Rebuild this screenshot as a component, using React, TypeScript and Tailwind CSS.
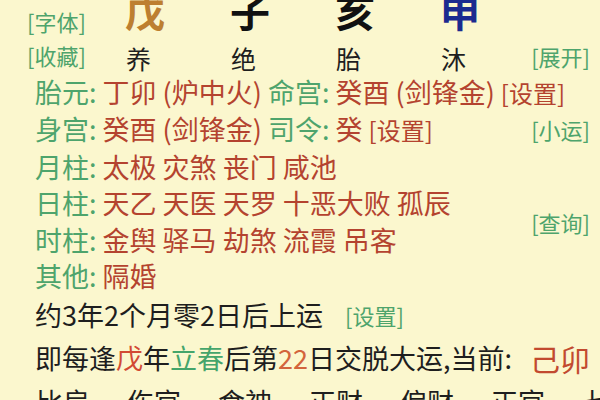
import React from "react";

const G = "text-[#4ea46c]";
const R = "text-[#b4432f]";

function Line({ label, children }: { label: string; children: React.ReactNode }) {
  return (
    <div className="whitespace-nowrap text-[27px] leading-[36.4px]">
      <span className={G}>{label}: </span>
      {children}
    </div>
  );
}

export default function App() {
  return (
    <div className="w-[600px] h-[400px] overflow-hidden bg-[#fbf7ce] text-[#1e1e1e] font-['Noto_Sans_CJK_SC','Noto_Sans',sans-serif]">
      {/* Row 1 */}
      <div className="flex h-[36px] pl-[27px]">
        <span className={`w-[65.5px] text-[22px] leading-[22px] mt-[10px] whitespace-nowrap ${G}`}>[字体]</span>
        <span className="w-[105px] text-center text-[40px] leading-[40px] -mt-[10px] font-bold text-[#bd7f30]">戊</span>
        <span className="w-[105px] text-center text-[40px] leading-[40px] -mt-[10px] font-bold text-[#111111]">子</span>
        <span className="w-[105px] text-center text-[40px] leading-[40px] -mt-[10px] font-bold text-[#111111]">亥</span>
        <span className="w-[105px] text-center text-[40px] leading-[40px] -mt-[10px] font-bold text-[#1b2a8f]">申</span>
      </div>
      {/* Row 2 */}
      <div className="flex h-[38px] pl-[27px] pr-[10px]">
        <span className={`w-[59px] text-[22px] leading-[22px] mt-[8px] whitespace-nowrap ${G}`}>[收藏]</span>
        <span className="w-[105px] text-center text-[25px] leading-[26px] mt-[9px]">养</span>
        <span className="w-[105px] text-center text-[25px] leading-[26px] mt-[9px]">绝</span>
        <span className="w-[105px] text-center text-[25px] leading-[26px] mt-[9px]">胎</span>
        <span className="w-[105px] text-center text-[25px] leading-[26px] mt-[9px]">沐</span>
        <span className={`flex-1 text-right text-[22px] leading-[22px] mt-[9px] whitespace-nowrap ${G}`}>[展开]</span>
      </div>
      {/* Info */}
      <div className="flex pl-[35px] pr-[10px]">
        <div className="flex-1 min-w-0 flex flex-col">
          <Line label="胎元">
            <span className={R}>丁卯 (炉中火) </span>
            <span className={G}>命宫: </span>
            <span className={R}>癸酉 (剑锋金) </span>
            <span className={`text-[24px] ${R}`}>[设置]</span>
          </Line>
          <Line label="身宫">
            <span className={R}>癸酉 (剑锋金) </span>
            <span className={G}>司令: </span>
            <span className={R}>癸 </span>
            <span className={`text-[24px] ${R}`}>[设置]</span>
          </Line>
          <Line label="月柱">
            <span className={R}>太极 灾煞 丧门 咸池</span>
          </Line>
          <Line label="日柱">
            <span className={R}>天乙 天医 天罗 十恶大败 孤辰</span>
          </Line>
          <Line label="时柱">
            <span className={R}>金舆 驿马 劫煞 流霞 吊客</span>
          </Line>
          <Line label="其他">
            <span className={R}>隔婚</span>
          </Line>
        </div>
        <div className="shrink-0 flex flex-col items-end">
          <span className={`text-[22px] leading-[22px] mt-[44px] whitespace-nowrap ${G}`}>[小运]</span>
          <span className={`text-[22px] leading-[22px] mt-[71px] whitespace-nowrap ${G}`}>[查询]</span>
        </div>
      </div>
      {/* Bottom lines */}
      <div className="pl-[35px] whitespace-nowrap">
        <div className="flex items-center h-[42px] text-[27px]">
          <span>约3年2个月零2日后上运</span>
          <span className={`ml-[22px] text-[22px] ${G}`}>[设置]</span>
        </div>
        <div className="flex items-center h-[44px] text-[27px]">
          <span>即每逢</span>
          <span className="text-[#d24a33]">戊</span>
          <span>年</span>
          <span className="text-[#45a56b]">立春</span>
          <span>后第</span>
          <span className="text-[#d3643c]">22</span>
          <span>日交脱大运,当前:</span>
          <span className="ml-[18px] text-[30px] text-[#c24a2f]">己卯</span>
        </div>
        <div className="flex items-center h-[44px] text-[27px] gap-[37px] pl-[1px]">
          <span>比肩</span>
          <span>伤官</span>
          <span>食神</span>
          <span>正财</span>
          <span>偏财</span>
          <span>正官</span>
          <span>七杀</span>
        </div>
      </div>
    </div>
  );
}
